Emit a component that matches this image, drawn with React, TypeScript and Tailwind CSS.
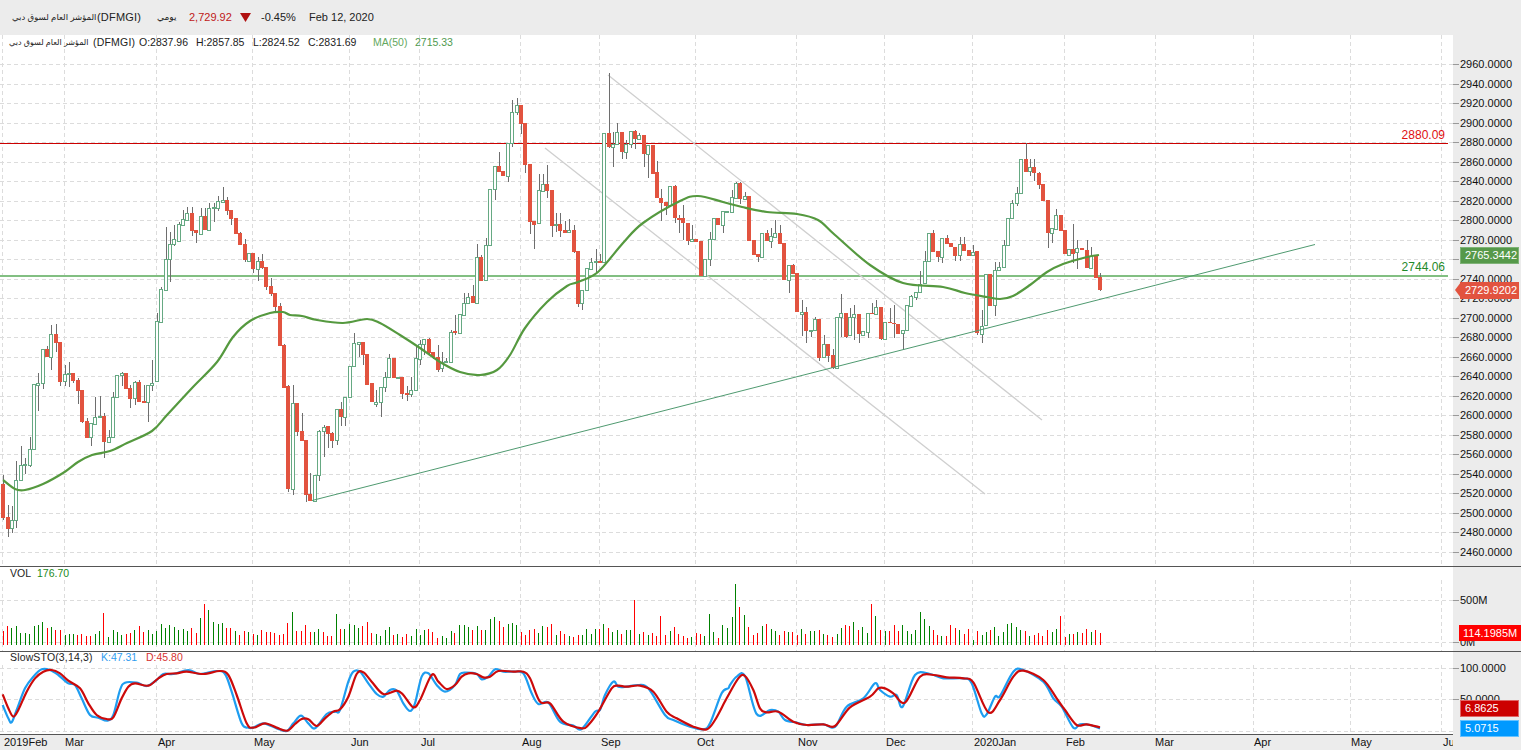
const GREEN = "#66a983";
const RED = "#e2533f";

// [x, bodyTop, bodyBottom, high, low, up] read off the 3x crops, turned to page pixels by seg()
const seg = (ox: number, oy: number, rows: number[][]) =>
  rows.map(([x, t, b, h, l, up]) => ({
    x: ox + x / 3,
    t: oy + t / 3,
    b: oy + b / 3,
    h: oy + h / 3,
    l: oy + l / 3,
    up: !!up,
  }));

const candles = [
  ...seg(0, 300, [
    [8, 552, 653, 525, 660, 0], [23, 652, 686, 615, 710, 0], [36, 661, 685, 618, 698, 1], [48, 541, 661, 484, 683, 1],
    [63, 494, 541, 438, 541, 1], [76, 493, 495, 473, 522, 1], [90, 448, 494, 411, 500, 1], [102, 253, 448, 253, 448, 1],
    [115, 250, 256, 220, 332, 1], [129, 148, 250, 148, 266, 1], [141, 148, 170, 138, 170, 0], [153, 103, 170, 75, 209, 1],
    [167, 102, 128, 72, 155, 0], [180, 127, 245, 127, 258, 0], [194, 222, 242, 196, 258, 1], [207, 220, 223, 186, 262, 1],
    [219, 220, 242, 220, 250, 0], [234, 241, 272, 235, 312, 0], [246, 271, 365, 271, 368, 0], [261, 363, 413, 354, 413, 0],
    [273, 370, 410, 370, 437, 1], [285, 352, 371, 291, 376, 1], [299, 349, 352, 288, 352, 1], [312, 349, 425, 340, 473, 0],
    [327, 412, 425, 390, 425, 1], [340, 290, 412, 277, 412, 1], [351, 226, 290, 226, 290, 1], [366, 220, 226, 216, 257, 1],
    [378, 220, 266, 220, 266, 0], [390, 265, 296, 255, 323, 0], [405, 247, 293, 242, 316, 1], [417, 247, 305, 240, 305, 0],
    [432, 304, 308, 255, 308, 0], [444, 256, 305, 256, 367, 1], [456, 248, 256, 180, 272, 1],
  ]),
  ...seg(130, 175, [
    [81, 438, 618, 415, 618, 1], [93, 343, 440, 337, 442, 1], [108, 253, 344, 155, 344, 1], [120, 208, 253, 170, 320, 1],
    [132, 193, 208, 150, 213, 1], [147, 148, 197, 140, 197, 1], [159, 133, 149, 105, 149, 1], [171, 115, 134, 97, 134, 1],
    [186, 114, 167, 95, 182, 0], [198, 166, 174, 166, 203, 0], [213, 124, 176, 98, 176, 1], [225, 124, 164, 98, 164, 0],
    [237, 100, 164, 85, 164, 1], [252, 97, 100, 85, 140, 1], [264, 79, 100, 62, 108, 1], [279, 76, 80, 36, 80, 1],
    [291, 76, 107, 66, 120, 0], [303, 106, 131, 106, 150, 0], [318, 129, 177, 129, 177, 0], [330, 175, 209, 170, 211, 0],
    [345, 208, 255, 192, 260, 0], [358, 235, 257, 235, 257, 1], [369, 235, 281, 235, 293, 0], [384, 259, 281, 247, 318, 1],
    [396, 259, 278, 237, 281, 0], [408, 277, 335, 277, 345, 0], [423, 334, 357, 310, 363, 0], [435, 355, 396, 355, 413, 0],
  ]),
  ...seg(0, 300, [
    [840, 18, 137, 10, 137, 0], [852, 136, 263, 132, 263, 0], [865, 258, 567, 255, 577, 0], [879, 310, 566, 255, 585, 1],
    [891, 310, 395, 310, 408, 0], [905, 394, 422, 340, 422, 0], [918, 421, 585, 421, 605, 0], [930, 583, 603, 518, 603, 0],
    [945, 526, 603, 526, 603, 1], [957, 394, 526, 390, 543, 1], [971, 380, 393, 375, 470, 1], [984, 379, 403, 379, 443, 0],
    [996, 400, 422, 395, 443, 0], [1011, 328, 421, 328, 435, 1],
  ]),
  ...seg(300, 300, [
    [123, 328, 350, 305, 377, 0], [135, 290, 350, 290, 378, 1], [150, 199, 290, 199, 290, 1], [162, 130, 199, 100, 199, 1],
    [177, 127, 131, 127, 170, 1], [189, 127, 165, 127, 195, 0], [201, 162, 254, 162, 254, 0], [216, 250, 305, 250, 305, 0],
    [228, 306, 311, 270, 320, 1], [243, 262, 305, 262, 350, 1], [255, 232, 262, 215, 275, 1], [267, 175, 232, 163, 232, 1],
    [282, 175, 233, 175, 233, 0], [294, 232, 235, 232, 235, 1], [306, 232, 281, 232, 296, 0], [321, 280, 284, 258, 302, 0],
    [333, 271, 281, 230, 290, 1], [348, 175, 271, 135, 271, 1], [360, 133, 178, 120, 195, 1], [372, 118, 133, 118, 165, 1],
    [387, 117, 160, 115, 165, 0], [399, 155, 172, 155, 178, 0], [414, 172, 210, 135, 215, 0], [426, 186, 205, 155, 215, 1],
    [438, 184, 187, 175, 190, 1], [453, 95, 185, 90, 185, 1], [465, 94, 100, 45, 105, 0],
  ]),
  ...seg(340, 70, [
    [360, 733, 790, 733, 790, 1], [372, 700, 735, 670, 735, 1], [384, 680, 700, 670, 700, 1], [399, 679, 699, 645, 699, 0],
    [411, 562, 699, 522, 699, 1], [423, 562, 632, 555, 632, 0], [438, 526, 630, 505, 632, 1], [450, 358, 526, 358, 526, 1],
    [465, 289, 358, 289, 390, 1], [477, 289, 305, 247, 305, 0], [489, 304, 318, 304, 318, 0], [504, 218, 318, 218, 335, 1],
    [516, 127, 218, 90, 232, 1], [531, 105, 127, 85, 135, 1], [543, 105, 161, 105, 192, 0], [555, 160, 284, 160, 308, 0],
    [570, 282, 455, 282, 492, 0], [582, 454, 464, 454, 537, 0], [597, 361, 460, 312, 460, 1], [609, 343, 363, 312, 363, 1],
    [621, 343, 362, 285, 383, 0], [636, 360, 467, 360, 500, 0], [648, 463, 466, 430, 485, 1], [660, 462, 483, 430, 502, 0],
    [675, 481, 488, 453, 488, 0], [687, 481, 487, 447, 487, 1], [702, 481, 545, 465, 548, 0], [714, 544, 701, 544, 710, 0],
    [726, 661, 700, 661, 720, 1], [741, 595, 661, 595, 661, 1], [753, 577, 596, 563, 596, 1], [768, 574, 577, 537, 605, 1],
    [780, 574, 578, 553, 578, 0], [792, 190, 575, 190, 575, 1], [807, 190, 230, 10, 235, 0], [819, 222, 230, 185, 290, 1],
    [831, 187, 222, 158, 222, 1], [846, 186, 245, 186, 267, 0], [858, 222, 245, 210, 267, 1], [873, 184, 222, 184, 234, 1],
    [885, 184, 207, 180, 237, 0], [897, 196, 206, 190, 206, 1], [912, 196, 251, 196, 290, 0], [924, 226, 251, 226, 323, 1],
    [939, 226, 311, 226, 311, 0], [951, 307, 384, 273, 384, 0], [963, 384, 398, 358, 452, 0], [978, 396, 407, 396, 435, 0],
    [990, 349, 405, 349, 405, 1], [1005, 348, 443, 345, 460, 0], [1017, 443, 449, 435, 488, 0],
  ]),
  ...seg(680, 130, [
    [9, 264, 278, 225, 330, 0], [24, 279, 332, 278, 345, 0], [36, 327, 332, 285, 332, 1], [48, 327, 335, 327, 335, 0],
    [63, 333, 437, 333, 437, 0], [75, 388, 437, 388, 437, 1], [90, 328, 388, 305, 408, 1], [102, 265, 328, 265, 328, 1],
    [114, 265, 285, 265, 285, 0], [129, 243, 284, 243, 308, 1], [141, 243, 246, 243, 246, 1], [156, 202, 245, 180, 250, 1],
    [168, 159, 203, 155, 203, 1], [180, 159, 207, 155, 222, 0], [195, 199, 206, 185, 206, 1], [207, 199, 332, 199, 332, 0],
    [222, 331, 375, 331, 375, 0], [234, 373, 380, 373, 395, 0], [246, 310, 380, 310, 380, 1], [261, 309, 332, 300, 332, 0],
    [273, 319, 332, 293, 353, 1], [285, 310, 320, 270, 320, 1], [300, 310, 342, 285, 342, 0], [312, 339, 449, 339, 449, 0],
    [327, 406, 451, 406, 490, 1], [339, 405, 431, 403, 431, 0], [351, 429, 545, 429, 545, 0], [366, 547, 551, 510, 617, 1],
    [378, 547, 602, 530, 640, 0], [393, 600, 604, 600, 620, 1], [405, 567, 600, 560, 600, 1], [417, 567, 684, 567, 692, 0],
    [432, 642, 682, 615, 682, 1], [444, 642, 678, 642, 695, 0], [459, 675, 715, 658, 718, 0], [471, 562, 714, 562, 714, 1],
    [483, 550, 562, 492, 620, 1], [498, 550, 620, 550, 625, 0], [510, 562, 616, 535, 616, 1], [522, 553, 562, 525, 630, 1],
    [537, 552, 612, 552, 640, 0], [549, 604, 614, 604, 614, 1], [564, 549, 605, 549, 625, 1], [576, 549, 553, 520, 553, 0],
    [588, 532, 551, 510, 551, 1], [603, 530, 628, 530, 630, 0], [615, 576, 626, 576, 626, 1], [630, 577, 580, 535, 580, 0],
    [642, 579, 583, 525, 625, 0], [654, 582, 611, 582, 611, 0], [669, 601, 610, 601, 660, 1], [681, 526, 601, 526, 601, 1],
    [693, 499, 527, 495, 527, 1], [708, 487, 502, 487, 510, 1], [720, 461, 487, 422, 487, 1], [735, 394, 458, 362, 458, 1],
    [747, 310, 394, 310, 394, 1], [759, 310, 365, 300, 365, 0], [774, 363, 381, 363, 397, 0], [786, 325, 382, 325, 398, 1],
    [801, 324, 342, 315, 342, 0], [813, 339, 352, 339, 352, 0], [825, 350, 378, 350, 392, 0], [840, 343, 376, 320, 392, 1],
    [852, 342, 362, 322, 362, 0], [867, 360, 378, 360, 378, 0], [879, 365, 376, 345, 376, 1], [891, 363, 608, 363, 616, 0],
    [906, 587, 612, 540, 638, 1], [918, 431, 586, 431, 586, 1], [930, 431, 527, 431, 527, 0], [945, 421, 526, 395, 558, 1],
    [957, 412, 421, 395, 421, 1], [972, 346, 412, 330, 412, 1], [984, 265, 346, 265, 346, 1], [996, 219, 264, 210, 264, 1],
    [1011, 190, 220, 172, 228, 1], [1023, 88, 190, 88, 190, 1], [1038, 87, 126, 40, 126, 0], [1050, 112, 124, 87, 138, 1],
    [1062, 112, 130, 87, 152, 0], [1077, 129, 164, 125, 178, 0], [1089, 162, 212, 162, 212, 0], [1104, 211, 308, 211, 355, 0],
    [1116, 295, 308, 295, 340, 1], [1128, 256, 296, 237, 296, 1], [1143, 255, 302, 255, 302, 0], [1155, 301, 372, 301, 372, 0],
    [1167, 358, 374, 358, 374, 1], [1180, 358, 372, 283, 400, 0], [1192, 355, 367, 330, 418, 1], [1207, 354, 361, 354, 361, 0],
    [1221, 360, 414, 331, 414, 0], [1233, 378, 415, 350, 415, 1], [1248, 375, 443, 375, 443, 0], [1260, 441, 480, 430, 483, 0],
  ]),
];

const ma50 =
  "3,480 15,489 25,490 43,484 63,473 78,462 92,455 110,451 127,443 152,431 167,415 193,387 217,362 233,337 250,321 270,313 283,312 290,315 302,316 317,320 343,323 367,319 380,323 400,335 420,348 440,362 460,372 480,375 497,370 510,355 525,328 547,302 567,286 578,282 598,272 623,243 643,223 680,201 698,196 723,202 742,207 767,212 797,214 818,220 835,235 870,265 903,283 943,287 965,293 987,297 1000,299 1013,296 1030,285 1047,272 1063,264 1087,257 1099,255";

// [x, top, up] from the crops; all bars stand on y=645
const vols = [
  ...[
    [8, 213, 0], [22, 197, 0], [34, 204, 1], [47, 198, 1], [61, 219, 1], [74, 219, 1], [88, 222, 1], [101, 198, 1], [113, 195, 1], [127, 186, 1],
    [140, 204, 0], [152, 201, 1], [166, 210, 0], [180, 210, 0], [194, 224, 1], [206, 222, 1], [218, 222, 1], [232, 224, 0], [244, 222, 0], [259, 228, 0],
    [271, 228, 0], [284, 222, 1], [298, 213, 1], [310, 159, 0], [325, 231, 1], [338, 210, 1], [351, 216, 1], [364, 224, 1], [377, 222, 0], [389, 219, 0],
    [403, 210, 1], [416, 197, 0], [430, 216, 0], [443, 210, 1], [455, 222, 1], [469, 213, 1], [482, 192, 1], [496, 204, 1], [508, 195, 1], [522, 202, 1],
    [535, 210, 1], [548, 208, 1], [560, 213, 1], [574, 204, 0], [587, 219, 0], [601, 174, 1], [613, 132, 0], [625, 150, 1], [640, 186, 1], [653, 192, 1],
    [666, 190, 1], [679, 204, 0], [691, 204, 0], [706, 213, 1], [718, 225, 0], [732, 213, 0], [745, 216, 1], [758, 222, 0], [771, 225, 1], [784, 210, 0],
    [797, 216, 0], [810, 216, 0], [823, 219, 0], [837, 224, 0], [850, 222, 0], [862, 189, 0], [877, 156, 1], [889, 213, 0], [904, 213, 0], [916, 195, 0],
    [929, 216, 0], [942, 216, 1], [955, 207, 1], [968, 216, 0], [981, 228, 0], [994, 228, 0], [1009, 162, 1],
  ].map(([x, t, up]) => ({ x: x / 3, t: 560 + t / 3, up })),
  ...[
    [1, 177, 0], [13, 177, 1], [28, 162, 1], [41, 165, 1], [54, 174, 1], [67, 168, 0], [80, 156, 0], [94, 189, 0], [107, 192, 1], [121, 198, 1],
    [134, 180, 1], [146, 171, 1], [160, 195, 0], [172, 192, 1], [185, 201, 0], [199, 192, 0], [212, 198, 1], [227, 177, 1], [239, 195, 1], [251, 180, 1],
    [265, 177, 0], [277, 186, 0], [292, 204, 0], [305, 198, 1], [317, 204, 1], [332, 183, 1], [343, 189, 0], [358, 165, 1], [371, 165, 1], [383, 171, 1],
    [397, 180, 0], [410, 168, 1], [422, 180, 0], [436, 180, 1], [449, 147, 1], [463, 141, 1], [476, 153, 0], [488, 171, 0], [503, 162, 1], [515, 159, 1],
    [529, 165, 1], [542, 186, 0], [554, 195, 0], [568, 180, 0], [581, 177, 0], [595, 189, 1], [607, 168, 1], [620, 171, 0], [634, 162, 0], [647, 195, 1],
    [659, 183, 0], [673, 192, 0], [686, 198, 1], [700, 201, 0], [713, 195, 0], [725, 195, 1], [739, 177, 1], [752, 192, 1], [766, 177, 1], [778, 177, 0],
    [790, 162, 1], [805, 174, 0], [817, 186, 1], [830, 180, 1], [844, 192, 0], [857, 180, 1], [871, 180, 1], [883, 90, 0], [896, 192, 1], [910, 186, 0],
    [923, 195, 1], [937, 189, 0], [949, 198, 0], [961, 138, 0], [976, 195, 0], [989, 183, 1], [1003, 171, 0], [1015, 192, 0], [1028, 198, 0], [1041, 204, 0],
    [1054, 201, 1], [1067, 189, 0], [1080, 192, 0], [1093, 198, 1], [1108, 132, 1], [1120, 186, 1], [1133, 204, 0], [1147, 165, 1], [1160, 174, 1], [1175, 141, 1],
  ].map(([x, t, up]) => ({ x: 340 + x / 3, t: 570 + t / 3, up })),
  ...[
    [16, 42, 1], [28, 111, 0], [43, 135, 1], [55, 171, 0], [70, 195, 0], [82, 189, 0], [95, 168, 1], [109, 162, 0], [122, 177, 1], [134, 183, 1],
    [148, 195, 0], [161, 183, 0], [175, 186, 1], [187, 186, 0], [200, 195, 0], [214, 177, 1], [226, 192, 0], [241, 183, 1], [253, 183, 1], [266, 180, 0],
    [280, 192, 1], [292, 195, 0], [307, 201, 0], [320, 192, 1], [332, 174, 1], [346, 165, 0], [358, 168, 0], [370, 156, 1], [385, 180, 0], [397, 171, 1],
    [411, 189, 1], [424, 102, 0], [436, 138, 1], [451, 180, 0], [464, 183, 1], [478, 183, 0], [491, 165, 0], [503, 183, 0], [517, 165, 1], [530, 183, 1],
    [543, 192, 1], [556, 180, 1], [569, 126, 1], [583, 147, 1], [596, 168, 1], [608, 180, 0], [622, 195, 0], [634, 198, 1], [649, 198, 0], [661, 165, 0],
    [674, 174, 0], [688, 180, 1], [701, 192, 0], [715, 177, 0], [728, 210, 1], [740, 183, 0], [755, 195, 1], [767, 186, 1], [779, 180, 0], [793, 171, 1],
    [805, 198, 1], [820, 186, 1], [832, 162, 1], [844, 159, 1], [858, 171, 1], [871, 180, 1], [886, 183, 0], [898, 198, 1], [911, 195, 0], [925, 189, 0],
    [937, 198, 0], [952, 180, 0], [965, 186, 1], [977, 177, 1], [991, 138, 0], [1004, 201, 0], [1016, 192, 1], [1029, 192, 0], [1042, 186, 1], [1056, 189, 0],
    [1069, 177, 0], [1083, 186, 1], [1096, 180, 0], [1109, 189, 0],
  ].map(([x, t, up]) => ({ x: 730 + x / 3, t: 570 + t / 3, up })),
];

const pts = (ox: number, oy: number, raw: number[][]) => raw.map(([x, y]) => `${ox + x / 3},${oy + y / 3}`).join(" ");

const stochK = [
  pts(0, 560, [[8, 435], [25, 475], [35, 487], [50, 450], [75, 385], [100, 350], [125, 328], [150, 330], [175, 345], [205, 370], [225, 375], [245, 415], [270, 465], [295, 473], [322, 482], [340, 465], [360, 390], [375, 368], [410, 368], [440, 378], [470, 360], [490, 342], [520, 342], [565, 330], [600, 342], [650, 333], [675, 342], [695, 395], [725, 490], [745, 503], [760, 503], [790, 490], [830, 505], [860, 513], [880, 490], [903, 467], [925, 490], [945, 505], [980, 462], [1005, 455]]),
  pts(340, 570, [[0, 420], [25, 335], [40, 305], [60, 305], [85, 340], [110, 372], [130, 380], [150, 360], [170, 362], [190, 400], [210, 423], [225, 400], [245, 320], [265, 310], [290, 345], [315, 365], [345, 345], [360, 312], [380, 308], [410, 312], [425, 328], [445, 320], [465, 298], [490, 305], [520, 305], [550, 310], [575, 370], [595, 402], [625, 398], [660, 455], [700, 467], [725, 477], [765, 425], [780, 420], [795, 375], [820, 335], [835, 350], [860, 350], [895, 345], [925, 355], [975, 435], [1000, 450], [1050, 470], [1090, 478], [1110, 460], [1145, 370], [1165, 355]]),
  pts(730, 570, [[0, 345], [20, 320], [45, 318], [80, 432], [120, 420], [145, 425], [165, 450], [200, 458], [230, 465], [280, 463], [305, 473], [320, 465], [350, 410], [400, 385], [435, 340], [450, 360], [480, 380], [500, 375], [518, 410], [555, 315], [600, 312], [640, 325], [700, 325], [725, 340], [755, 430], [770, 433], [795, 380], [810, 378], [850, 305], [880, 300], [940, 335], [970, 385], [995, 410], [1030, 473], [1050, 463], [1080, 465], [1110, 475]]),
].join(" ");

const stochD = [
  pts(0, 560, [[8, 403], [25, 445], [40, 470], [55, 450], [80, 395], [105, 355], [130, 335], [155, 330], [180, 340], [205, 362], [240, 385], [265, 430], [290, 465], [320, 477], [340, 472], [365, 415], [385, 380], [405, 370], [445, 377], [475, 355], [500, 342], [530, 340], [560, 335], [610, 342], [660, 333], [685, 345], [710, 405], [740, 490], [760, 503], [795, 490], [830, 503], [862, 512], [885, 492], [905, 477], [925, 478], [950, 498], [975, 475], [1000, 455]]),
  pts(340, 570, [[0, 418], [25, 380], [50, 312], [70, 307], [95, 335], [130, 372], [170, 362], [190, 375], [220, 412], [240, 390], [275, 315], [295, 335], [320, 357], [345, 345], [365, 320], [385, 310], [410, 312], [430, 322], [450, 320], [475, 303], [520, 305], [550, 305], [570, 325], [600, 395], [630, 400], [670, 455], [725, 475], [745, 465], [775, 425], [815, 355], [835, 347], [860, 350], [900, 347], [940, 365], [980, 425], [1010, 445], [1060, 470], [1100, 478], [1125, 450], [1160, 385]]),
  pts(730, 570, [[25, 325], [45, 318], [70, 360], [90, 415], [110, 427], [145, 425], [190, 455], [230, 465], [280, 463], [315, 468], [360, 412], [420, 380], [445, 355], [465, 355], [490, 370], [525, 398], [570, 320], [610, 315], [650, 322], [700, 325], [730, 337], [775, 427], [810, 390], [850, 320], [880, 302], [940, 330], [980, 385], [1005, 420], [1040, 465], [1070, 463], [1110, 472]]),
].join(" ");

// round off the hand-read points so the lines don't look like polygons
function smooth(s: string) {
  const p = s.split(" ").map((a) => a.split(",").map(Number));
  let d = `M${p[0][0]} ${p[0][1]}`;
  for (let i = 0; i < p.length - 1; i++) {
    const a = p[i - 1] ?? p[i];
    const b = p[i];
    const c = p[i + 1];
    const e = p[i + 2] ?? c;
    d += ` C${b[0] + (c[0] - a[0]) / 6} ${b[1] + (c[1] - a[1]) / 6} ${c[0] - (e[0] - b[0]) / 6} ${c[1] - (e[1] - b[1]) / 6} ${c[0]} ${c[1]}`;
  }
  return d;
}

const monthX = [2.5, 64.5, 156.5, 252.5, 349.5, 419.5, 520.5, 599.5, 695.5, 796.5, 884.5, 972.5, 1064.5, 1155.5, 1253.5, 1350.5, 1441.5];
const months: [string, number][] = [
  ["2019Feb", 4], ["Mar", 65], ["Apr", 158], ["May", 254], ["Jun", 351], ["Jul", 421], ["Aug", 522], ["Sep", 601], ["Oct", 697],
  ["Nov", 798], ["Dec", 886], ["2020Jan", 974], ["Feb", 1066], ["Mar", 1155], ["Apr", 1254], ["May", 1351], ["Jun", 1443],
];

const prices = Array.from({ length: 26 }, (_, i) => 2960 - i * 20);
const priceY = (i: number) => Math.round(64 + i * 19.52) + 0.5;

function Grid({ top, bottom, rows }: { top: number; bottom: number; rows: number[] }) {
  return (
    <g stroke="#dcdcdc" strokeWidth="1" strokeDasharray="4 3" shapeRendering="crispEdges">
      {rows.map((y) => (
        <line key={y} x1="0" x2="1453" y1={y} y2={y} />
      ))}
      {monthX.map((x) => (
        <line key={x} x1={x} x2={x} y1={top} y2={bottom} />
      ))}
    </g>
  );
}

function Tick({ y, top, label }: { y: number; top: number; label: string }) {
  return (
    <div className="absolute left-0 flex items-center -translate-y-1/2" style={{ top: y - top }}>
      <span className="w-[6px] h-px bg-[#999]" />
      <span className="ml-[1px] -mt-px text-[11px] leading-none text-[#111]">{label}</span>
    </div>
  );
}

function Badge({ y, className, label }: { y: number; className: string; label: string }) {
  return (
    <div
      className={`absolute left-[7px] h-[17px] w-[59px] flex items-center pl-[4px] text-[11px] leading-none text-white border ${className}`}
      style={{ top: y }}
    >
      {label}
    </div>
  );
}

function PriceChart() {
  return (
    <svg width="1453" height="531" viewBox="0 35 1453 531" className="block">
      <Grid top={35} bottom={566} rows={prices.map((_, i) => priceY(i))} />
      <line x1="0" x2="1448" y1="143.5" y2="143.5" stroke="#cc0000" />
      <line x1="0" x2="1448" y1="276" y2="276" stroke="#82bf82" strokeWidth="2" />
      <line x1="608" y1="75" x2="1042" y2="420" stroke="#cfcfcf" strokeWidth="1.3" />
      <line x1="545" y1="148" x2="985" y2="494" stroke="#cfcfcf" strokeWidth="1.3" />
      {candles.map((c, i) => {
        const cx = Math.round(c.x);
        const top = Math.round(c.t);
        const bot = Math.max(Math.round(c.b), top + 1);
        return (
          <g key={i} shapeRendering="crispEdges">
            <rect x={cx} y={c.h} width="1" height={Math.max(c.l - c.h, 0)} fill="#6e6e6e" />
            {c.up ? (
              <rect x={cx - 1.5} y={top + 0.5} width="3" height={bot - top} fill="#fff" stroke={GREEN} />
            ) : (
              <rect x={cx - 2} y={top} width="4" height={bot - top} fill={RED} />
            )}
          </g>
        );
      })}
      <path d={smooth(ma50)} fill="none" stroke="#55993f" strokeWidth="2.2" strokeLinejoin="round" />
      <line x1="312" y1="500.5" x2="1315" y2="244.5" stroke="#4f9a70" strokeWidth="1" />
      <text x="1445" y="138.5" textAnchor="end" fontSize="12" fill="#e01010">2880.09</text>
      <text x="1445" y="271" textAnchor="end" fontSize="12" fill="#1f8a2a">2744.06</text>
    </svg>
  );
}

function VolumeChart() {
  return (
    <svg width="1453" height="84" viewBox="0 567 1453 84" className="block">
      <Grid top={580} bottom={651} rows={[600.5, 642.5]} />
      {vols.map((v, i) => (
        <rect
          key={i}
          x={Math.round(v.x)}
          y={Math.round(v.t)}
          width="1"
          height={645 - Math.round(v.t)}
          fill={v.up ? "#008000" : "#ff0000"}
          shapeRendering="crispEdges"
        />
      ))}
    </svg>
  );
}

function StochChart() {
  return (
    <svg width="1453" height="82" viewBox="0 652 1453 82" className="block">
      <Grid top={665} bottom={734} rows={[668.5, 699.5, 731.5]} />
      <path d={smooth(stochK)} fill="none" stroke="#1e9df0" strokeWidth="2.2" strokeLinejoin="round" />
      <path d={smooth(stochD)} fill="none" stroke="#cc0a0a" strokeWidth="2.2" strokeLinejoin="round" />
    </svg>
  );
}

const NAME = "المؤشر العام لسوق دبي";

export default function App() {
  return (
    <div className="w-[1521px] h-[750px] overflow-hidden flex flex-col bg-white text-[#222] font-['Liberation_Sans','DejaVu_Sans',sans-serif]">
      <header className="h-[35px] shrink-0 bg-[#ececec] flex items-center pl-[12px] text-[11px] text-[#222]">
        <span className="w-[85px] whitespace-nowrap text-[8.5px]">{NAME}</span>
        <span className="w-[48px] whitespace-nowrap tracking-[0.2px]">(DFMGI)</span>
        <span className="ml-[12px] w-[20px] whitespace-nowrap text-[9px]">يومي</span>
        <span className="ml-[12px] w-[42px] text-[#c01818]">2,729.92</span>
        <svg width="11" height="9" viewBox="0 0 11 9" className="ml-[9px]">
          <polygon points="0,0 11,0 5.5,9" fill="#b01010" />
        </svg>
        <span className="ml-[10px] w-[34px]">-0.45%</span>
        <span className="ml-[14px]">Feb 12, 2020</span>
      </header>

      <section className="relative h-[531px] shrink-0 flex">
        <div className="w-[1453px]">
          <PriceChart />
        </div>
        <div className="relative flex-1 bg-[#ececec]">
          {prices.map((p, i) => (
            <Tick key={p} y={priceY(i)} top={35} label={`${p}.0000`} />
          ))}
          <Badge y={212} label="2765.3442" className="bg-[#56994a] border-[#7fb377]" />
          <div className="absolute left-[2px] top-[247px] w-0 h-0 border-y-[8.5px] border-y-transparent border-r-[6px] border-r-[#e2533f]" />
          <Badge y={247} label="2729.9202" className="bg-[#e2533f] border-[#e2533f]" />
        </div>
        <div className="absolute left-[9px] top-[2px] flex items-center h-[11px] text-[10.5px] leading-none text-[#222] whitespace-nowrap">
          <span className="w-[84px] text-[8px]">{NAME}</span>
          <span className="w-[46px] tracking-[0.2px]">(DFMGI)</span>
          <span className="w-[57px]">O:2837.96</span>
          <span className="w-[57px]">H:2857.85</span>
          <span className="w-[55px]">L:2824.52</span>
          <span className="w-[65px]">C:2831.69</span>
          <span className="w-[42px] text-[#64a860]">MA(50)</span>
          <span className="text-[#4f9a4f]">2715.33</span>
        </div>
      </section>

      <section className="relative h-[85px] shrink-0 flex border-t border-[#555]">
        <div className="w-[1453px]">
          <VolumeChart />
        </div>
        <div className="relative flex-1 bg-[#ececec]">
          <Tick y={600.5} top={567} label="500M" />
          <Tick y={642.5} top={567} label="0M" />
          <div className="absolute left-[6px] top-[58px] h-[16px] w-[62px] bg-[#ff0000] flex items-center pl-[4px] text-[11px] leading-none text-white">
            114.1985M
          </div>
        </div>
        <div className="absolute left-[10px] top-[1px] flex text-[10.5px] leading-[11px] whitespace-nowrap">
          <span className="w-[27px] text-[#222]">VOL</span>
          <span className="text-[#1a8a1a]">176.70</span>
        </div>
      </section>

      <section className="relative z-10 h-[83px] shrink-0 flex border-t border-[#555]">
        <div className="w-[1453px]">
          <StochChart />
        </div>
        <div className="relative flex-1 bg-[#ececec]">
          <Tick y={668.5} top={652} label="100.0000" />
          <Tick y={699.5} top={652} label="50.0000" />
          <Badge y={48} label="6.8625" className="bg-[#cc0000] border-[#e06666]" />
          <Badge y={68} label="5.0715" className="bg-[#0099ff] border-[#66c2ff]" />
        </div>
        <div className="absolute left-[10px] top-[0px] flex text-[10.5px] leading-[11px] whitespace-nowrap">
          <span className="w-[91px] text-[#222] tracking-[0.15px]">SlowSTO(3,14,3)</span>
          <span className="w-[45px] text-[#2f9df0]">K:47.31</span>
          <span className="text-[#d63333]">D:45.80</span>
        </div>
      </section>

      <footer className="flex-1 flex bg-[#ececec]">
        <div className="relative w-[1453px] overflow-hidden border-t border-[#555] text-[11px]">
          {months.map(([m, x]) => (
            <span key={`${m}${x}`} className="absolute top-0 leading-[14px] text-[#111]" style={{ left: x }}>
              {m}
            </span>
          ))}
        </div>
      </footer>
    </div>
  );
}
